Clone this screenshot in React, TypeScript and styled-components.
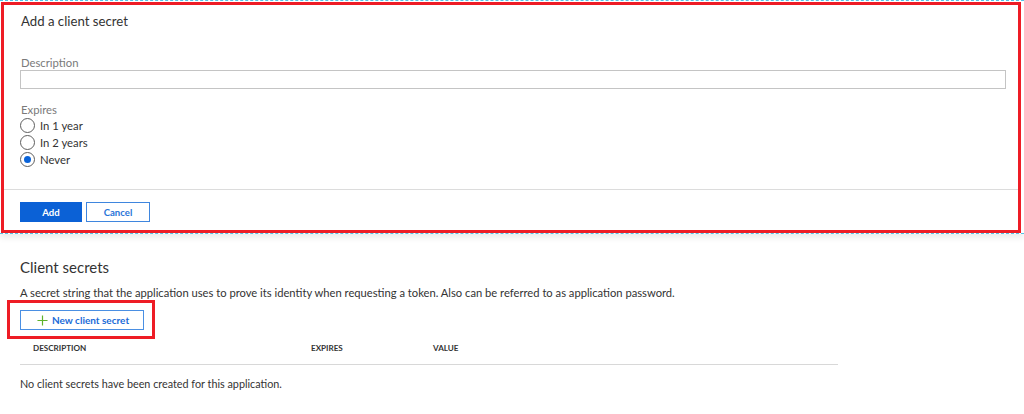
import React from "react";
import styled, { createGlobalStyle } from "styled-components";

const GlobalStyle = createGlobalStyle`
  html, body {
    margin: 0;
    padding: 0;
    background: #ffffff;
  }
  body {
    font-family: Lato, "Open Sans", sans-serif;
    color: #333333;
  }
  * {
    box-sizing: border-box;
  }
`;

const Sheet = styled.div`
  border-top: 1px dashed #53c3e6;
  border-bottom: 1px dashed #53c3e6;
  padding-top: 1px;
  box-shadow: 0 4px 6px rgba(0, 0, 0, 0.08);
  background: #ffffff;
`;

const Highlight = styled.div`
  border: 3px solid #ee1c25;
  margin: 0 3px 0 1px;
`;

const FormBody = styled.div`
  padding: 7px 12px 21px 16px;
`;

const Title = styled.h2`
  margin: 0 0 25px;
  padding-left: 1px;
  font-size: 13.2px;
  line-height: 19px;
  font-weight: 400;
  color: #333333;
`;

const FieldLabel = styled.label`
  display: block;
  font-size: 11.3px;
  line-height: 14px;
  padding-left: 1px;
  color: #7a7a7a;
`;

const TextInput = styled.input`
  display: block;
  width: 100%;
  height: 19px;
  margin: 0 0 14px;
  border: 1px solid #c4c4c4;
  outline: none;
  padding: 0 4px;
`;

const RadioList = styled.div`
  display: flex;
  flex-direction: column;
`;

const RadioRow = styled.label`
  display: flex;
  align-items: center;
  gap: 5px;
  height: 17px;
  font-size: 11.3px;
  color: #333333;
`;

const RadioCircle = styled.span<{ $checked?: boolean }>`
  width: 15px;
  height: 15px;
  border-radius: 50%;
  border: 1px solid #5e5e5e;
  display: flex;
  align-items: center;
  justify-content: center;
  &::after {
    content: "";
    width: 7px;
    height: 7px;
    border-radius: 50%;
    background: ${(p) => (p.$checked ? "#0a63d8" : "transparent")};
  }
`;

const Footer = styled.div`
  border-top: 1px solid #dcdcdc;
  padding: 12px 16px 8px;
  display: flex;
  gap: 4px;
`;

const Button = styled.button<{ $primary?: boolean }>`
  height: 20px;
  padding: 0;
  font-family: Lato, "Open Sans", sans-serif;
  font-size: 9.6px;
  font-weight: 700;
  cursor: pointer;
  width: ${(p) => (p.$primary ? "62px" : "64px")};
  background: ${(p) => (p.$primary ? "#0b61d6" : "#ffffff")};
  color: ${(p) => (p.$primary ? "#ffffff" : "#2a74d8")};
  border: 1px solid ${(p) => (p.$primary ? "#0b61d6" : "#3f86de")};
`;

const Section = styled.div`
  padding: 22px 0 0 20px;
`;

const SectionTitle = styled.h3`
  margin: 0;
  font-size: 15px;
  line-height: 22px;
  font-weight: 400;
  color: #333333;
`;

const SectionText = styled.p`
  margin: 7px 0 0;
  font-size: 11.2px;
  line-height: 15px;
  color: #333333;
`;

const ButtonFrame = styled.div`
  display: inline-block;
  margin: 0 0 0 -13px;
  padding: 7px 8px 6px 10px;
  border: 3px solid #ee1c25;
`;

const NewButton = styled.button`
  display: flex;
  align-items: center;
  gap: 4px;
  width: 124px;
  height: 20px;
  padding: 0 0 0 16px;
  background: #ffffff;
  border: 1px solid #4a8fe3;
  color: #1a6bd8;
  font-family: Lato, "Open Sans", sans-serif;
  font-size: 10px;
  font-weight: 700;
`;

const Table = styled.div`
  width: 818px;
`;

const HeaderRow = styled.div`
  display: grid;
  grid-template-columns: 278px 122px 1fr;
  padding: 3px 0 10px 13px;
  line-height: 12px;
  border-bottom: 1px solid #d8d8d8;
`;

const HeaderCell = styled.span`
  font-size: 8.1px;
  font-weight: 700;
  color: #333333;
`;

const EmptyText = styled.p`
  margin: 11px 0 0;
  font-size: 10.8px;
  line-height: 16px;
  color: #333333;
`;

const PlusIcon = () => (
  <svg width="11" height="11" viewBox="0 0 12 12">
    <path d="M6 0.5v11M0.5 6h11" stroke="#5fb22a" strokeWidth="1.3" fill="none" />
  </svg>
);

export default function App() {
  return (
    <>
      <GlobalStyle />
      <Sheet>
        <Highlight>
          <FormBody>
            <Title>Add a client secret</Title>
            <FieldLabel>Description</FieldLabel>
            <TextInput type="text" />
            <FieldLabel>Expires</FieldLabel>
            <RadioList>
              <RadioRow>
                <RadioCircle />
                In 1 year
              </RadioRow>
              <RadioRow>
                <RadioCircle />
                In 2 years
              </RadioRow>
              <RadioRow>
                <RadioCircle $checked />
                Never
              </RadioRow>
            </RadioList>
          </FormBody>
          <Footer>
            <Button $primary>Add</Button>
            <Button>Cancel</Button>
          </Footer>
        </Highlight>
      </Sheet>
      <Section>
        <SectionTitle>Client secrets</SectionTitle>
        <SectionText>
          A secret string that the application uses to prove its identity when requesting a token. Also can be
          referred to as application password.
        </SectionText>
        <ButtonFrame>
          <NewButton>
            <PlusIcon />
            New client secret
          </NewButton>
        </ButtonFrame>
        <Table>
          <HeaderRow>
            <HeaderCell>DESCRIPTION</HeaderCell>
            <HeaderCell>EXPIRES</HeaderCell>
            <HeaderCell>VALUE</HeaderCell>
          </HeaderRow>
          <EmptyText>No client secrets have been created for this application.</EmptyText>
        </Table>
      </Section>
    </>
  );
}
